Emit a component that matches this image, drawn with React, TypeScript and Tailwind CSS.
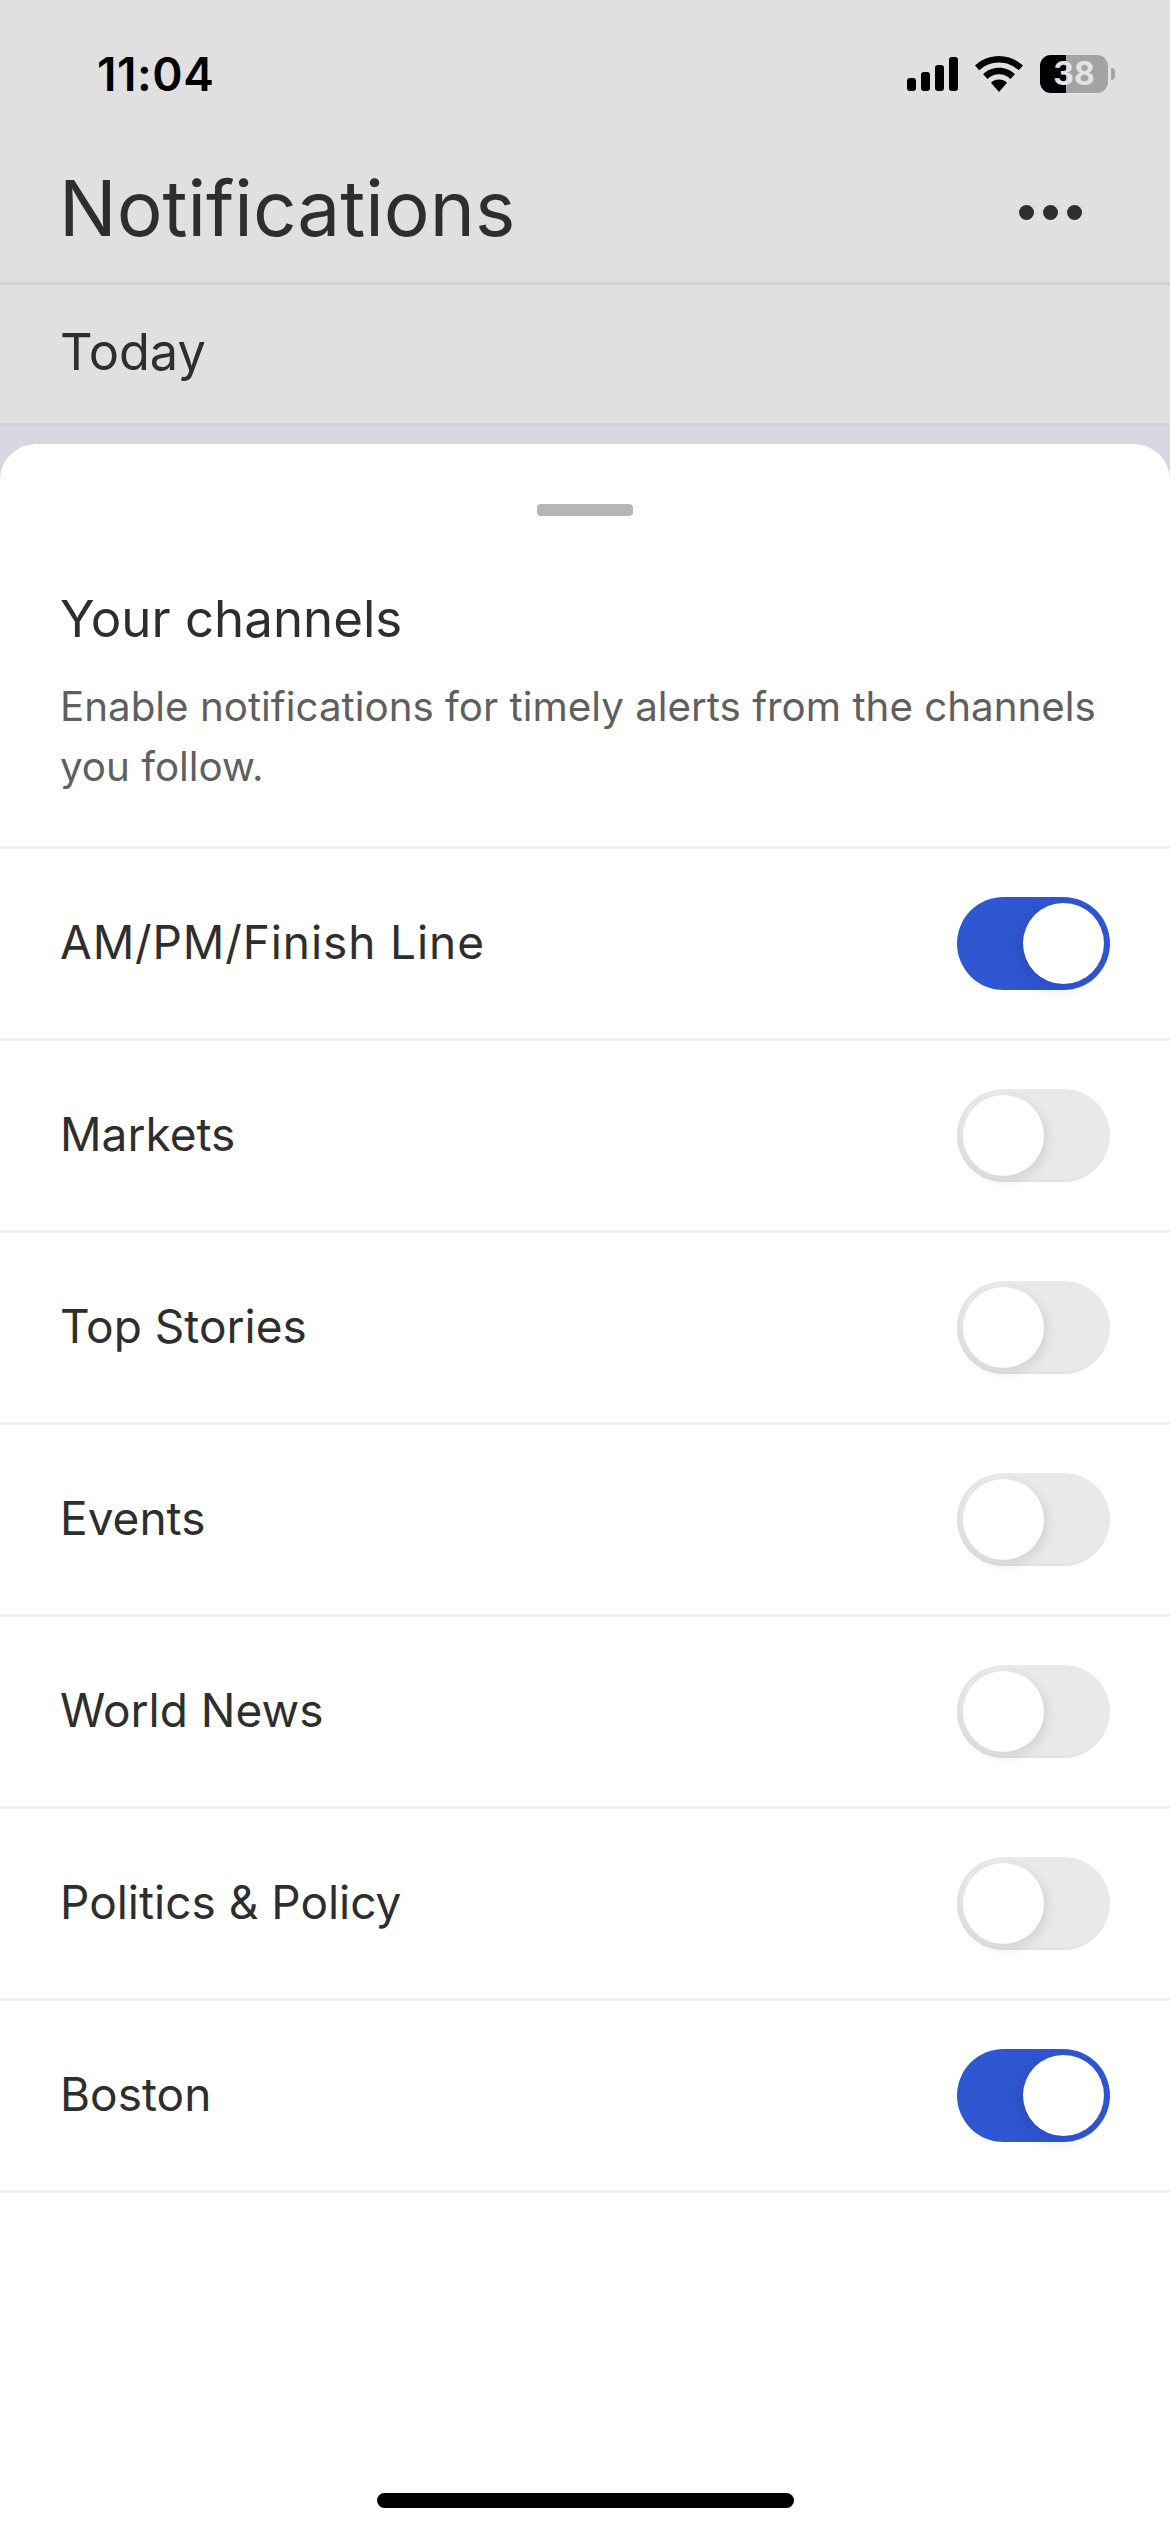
import { useState } from "react";

const channels = [
  { name: "AM/PM/Finish Line", on: true },
  { name: "Markets", on: false },
  { name: "Top Stories", on: false },
  { name: "Events", on: false },
  { name: "World News", on: false },
  { name: "Politics & Policy", on: false },
  { name: "Boston", on: true },
];

function Toggle({ on }: { on: boolean }) {
  if (on) {
    return (
      <div className="flex h-[93px] w-[153px] items-center justify-end rounded-full bg-[#2f57d2] pr-[6px]">
        <div className="h-[81px] w-[81px] rounded-full bg-white shadow-[-6px_4px_14px_rgba(20,40,120,0.18)]" />
      </div>
    );
  }
  return (
    <div className="flex h-[93px] w-[153px] items-center rounded-full bg-[#e9e9e9] pl-[6px] shadow-[inset_3px_-2px_3px_rgba(0,0,0,0.04)]">
      <div className="h-[81px] w-[81px] rounded-full bg-white shadow-[3px_4px_12px_rgba(0,0,0,0.1)]" />
    </div>
  );
}

function StatusIcons() {
  return (
    <div className="flex items-center">
      <svg width="51" height="34" viewBox="0 0 51 34" fill="#000" className="mr-[17px]">
        <rect x="0" y="21" width="9" height="13" rx="3" />
        <rect x="14" y="15" width="9" height="19" rx="3" />
        <rect x="28" y="8" width="9" height="26" rx="3" />
        <rect x="42" y="0" width="9" height="34" rx="3" />
      </svg>
      <svg width="48" height="36" viewBox="0 0 48 36" fill="#000" className="mr-[17px]">
        <path d="M24 0C14.6 0 6.2 3.7 0 9.6l4.3 4.7C9.3 9.4 16.3 6.4 24 6.4s14.7 3 19.7 7.9L48 9.6C41.8 3.7 33.4 0 24 0Z" />
        <path d="M24 11.8c-6.2 0-11.8 2.4-15.9 6.4l4.4 4.7c3-2.9 7-4.7 11.5-4.7s8.5 1.8 11.5 4.7l4.4-4.7c-4.1-4-9.7-6.4-15.9-6.4Z" />
        <path d="M24 23.6c-3.1 0-5.9 1.2-8 3.2L24 36l8-9.2c-2.1-2-4.9-3.2-8-3.2Z" />
      </svg>
      <div className="flex items-center">
        <div className="relative flex h-[38px] w-[68px] items-center justify-center overflow-hidden rounded-[11px] bg-[#a3a3a3]">
          <div className="absolute inset-y-0 left-0 w-[26px] bg-black" />
          <span className="relative text-[32px] leading-none font-bold text-[#e3e3e3]">38</span>
        </div>
        <div className="ml-[3px] h-[12px] w-[4px] rounded-r-full bg-[#a3a3a3]" />
      </div>
    </div>
  );
}

export default function App() {
  const [items] = useState(channels);

  return (
    <div className="flex h-[2532px] w-[1170px] flex-col overflow-hidden bg-[#d6d7e0] [font-family:Inter,sans-serif] text-[#2e2e2e]">
      <div className="flex h-[148px] items-center justify-between bg-[#e0e0e0] pr-[55px] pl-[97px]">
        <span className="text-[46px] leading-none font-semibold tracking-[0.6px] text-black">11:04</span>
        <StatusIcons />
      </div>
      <div className="flex h-[134px] items-center justify-between bg-[#e0e0e0] pr-[88px] pb-[6px] pl-[59px]">
        <h1 className="mb-[7px] text-[76.5px] leading-none font-normal">Notifications</h1>
        <div className="flex gap-[9px]">
          <span className="h-[15px] w-[15px] rounded-full bg-[#2e2e2e]" />
          <span className="h-[15px] w-[15px] rounded-full bg-[#2e2e2e]" />
          <span className="h-[15px] w-[15px] rounded-full bg-[#2e2e2e]" />
        </div>
      </div>
      <div className="flex h-[144px] items-center border-y-[3px] border-y-[#d2d2d2] bg-[#e0e0e0] pb-[3px] pl-[60px]">
        <span className="text-[50.5px] leading-none">Today</span>
      </div>

      <div className="mt-[18px] flex flex-1 flex-col rounded-t-[36px] bg-white">
        <div className="mx-auto mt-[60px] h-[12px] w-[96px] rounded-[4px] bg-[#b6b6b6]" />
        <div className="flex h-[333px] flex-col border-b-[3px] border-b-[#efefef] pt-[73px] pl-[60px]">
          <h2 className="text-[51px] leading-[60px] font-normal">Your channels</h2>
          <p className="mt-[28px] w-[1060px] text-[40.3px] leading-[60px] text-[#5f5f5f]">
            Enable notifications for timely alerts from the channels you follow.
          </p>
        </div>
        {items.map((c) => (
          <div
            key={c.name}
            className="flex h-[192px] items-center justify-between border-b-[3px] border-b-[#efefef] pr-[60px] pl-[60px]"
          >
            <span
              className={
                c.name.startsWith("AM")
                  ? "mb-[3px] text-[46px] leading-none tracking-[0.9px]"
                  : "mb-[3px] text-[46px] leading-none"
              }
            >
              {c.name}
            </span>
            <Toggle on={c.on} />
          </div>
        ))}
        <div className="flex flex-1 items-end justify-center pb-[24px]">
          <div className="h-[15px] w-[417px] rounded-[8px] bg-black" />
        </div>
      </div>
    </div>
  );
}
